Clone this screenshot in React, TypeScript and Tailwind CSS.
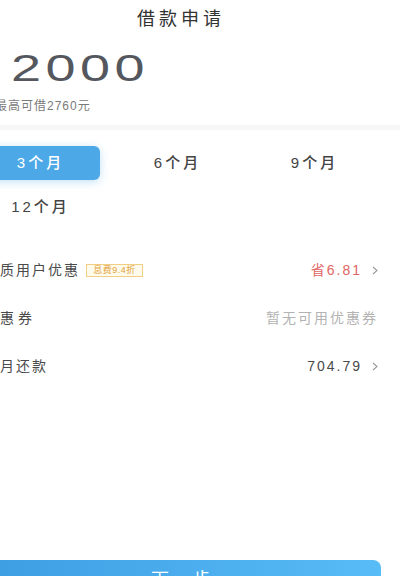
const TERMS = ["3个月", "6个月", "9个月", "12个月"];

function Chevron() {
  return (
    <svg width="6" height="9" viewBox="0 0 6 9" className="ml-[10px] shrink-0">
      <path d="M1 1 L5 4.5 L1 8" fill="none" stroke="#9a9a9a" strokeWidth="1.1" />
    </svg>
  );
}

export default function App() {
  const active = 0;
  return (
    <div
      className="relative h-[576px] w-[400px] overflow-hidden bg-white"
      style={{ fontFamily: '"Liberation Sans", "Noto Sans CJK SC", sans-serif' }}
    >
      <div className="-ml-[38px] flex w-[438px] flex-col">
        {/* Header */}
        <div className="flex h-[38px] items-center justify-center text-[18px] tracking-[4px] text-[#333]">
          借款申请
        </div>

        {/* Amount */}
        <div className="px-[19px]">
          <div className="ml-[30px] mt-[13px] h-[36px] text-[36px] leading-none tracking-[3px] text-[#54585e]">
            <span className="inline-block origin-left scale-x-[1.5]">2000</span>
          </div>
          <div className="ml-[14px] mt-[11px] h-[16px] text-[12px] leading-[16px] tracking-[1px] text-[#7a7a7a]">
            最高可借2760元
          </div>
        </div>

        <div className="mt-[11px] h-[5px] bg-[#f7f7f7]" />

        {/* Terms */}
        <div className="px-[19px] pt-[16px]">
          <div className="-ml-[3px] grid grid-cols-[122px_122px_122px] gap-x-[15px] gap-y-[10px]">
            {TERMS.map((t, i) => (
              <button
                key={t}
                className={
                  i === active
                    ? "flex h-[34px] items-center justify-center rounded-[6px] bg-[#4ca8e6] pl-[3px] text-[15px] font-medium tracking-[3px] text-white shadow-[0_2px_8px_rgba(76,168,230,0.35)]"
                    : "flex h-[34px] items-center justify-center pl-[3px] text-[15px] font-medium tracking-[3px] text-[#444]"
                }
              >
                {t}
              </button>
            ))}
          </div>
        </div>

        {/* Rows */}
        <div className="mt-[22px] px-[19px]">
          <div className="flex h-[48px] items-center justify-between">
            <div className="ml-[3px] flex items-center">
              <span className="text-[14px] tracking-[2px] text-[#4a4a4a]">优质用户优惠</span>
              <span className="ml-[6px] flex h-[13px] w-[57px] items-center justify-center border border-[#f0cf82] bg-[#fffbec] text-[9px] leading-none tracking-[0.5px] text-[#e2a23e]">
                息费9.4折
              </span>
            </div>
            <div className="mr-[3px] flex items-center">
              <span className="text-[14px] tracking-[2px] text-[#e06464]">省6.81</span>
              <Chevron />
            </div>
          </div>

          <div className="flex h-[48px] items-center justify-between">
            <span className="ml-[1px] text-[14px] tracking-[4px] text-[#4a4a4a]">优惠券</span>
            <span className="mr-[3px] text-[14px] tracking-[2px] text-[#b3b3b3]">暂无可用优惠券</span>
          </div>

          <div className="flex h-[48px] items-center justify-between">
            <span className="ml-[3px] text-[14px] tracking-[2px] text-[#4a4a4a]">每月还款</span>
            <div className="mr-[3px] flex items-center">
              <span className="text-[14px] tracking-[2px] text-[#4a4a4a]">704.79</span>
              <Chevron />
            </div>
          </div>
        </div>

        {/* Next button */}
        <div className="mt-[170px] px-[19px]">
          <button className="flex h-[40px] w-full items-center justify-center rounded-[8px] bg-gradient-to-r from-[#3d9de2] to-[#58bcf7] pl-[3px] text-[18px] tracking-[3px] text-white">
            下一步
          </button>
        </div>
      </div>
    </div>
  );
}
